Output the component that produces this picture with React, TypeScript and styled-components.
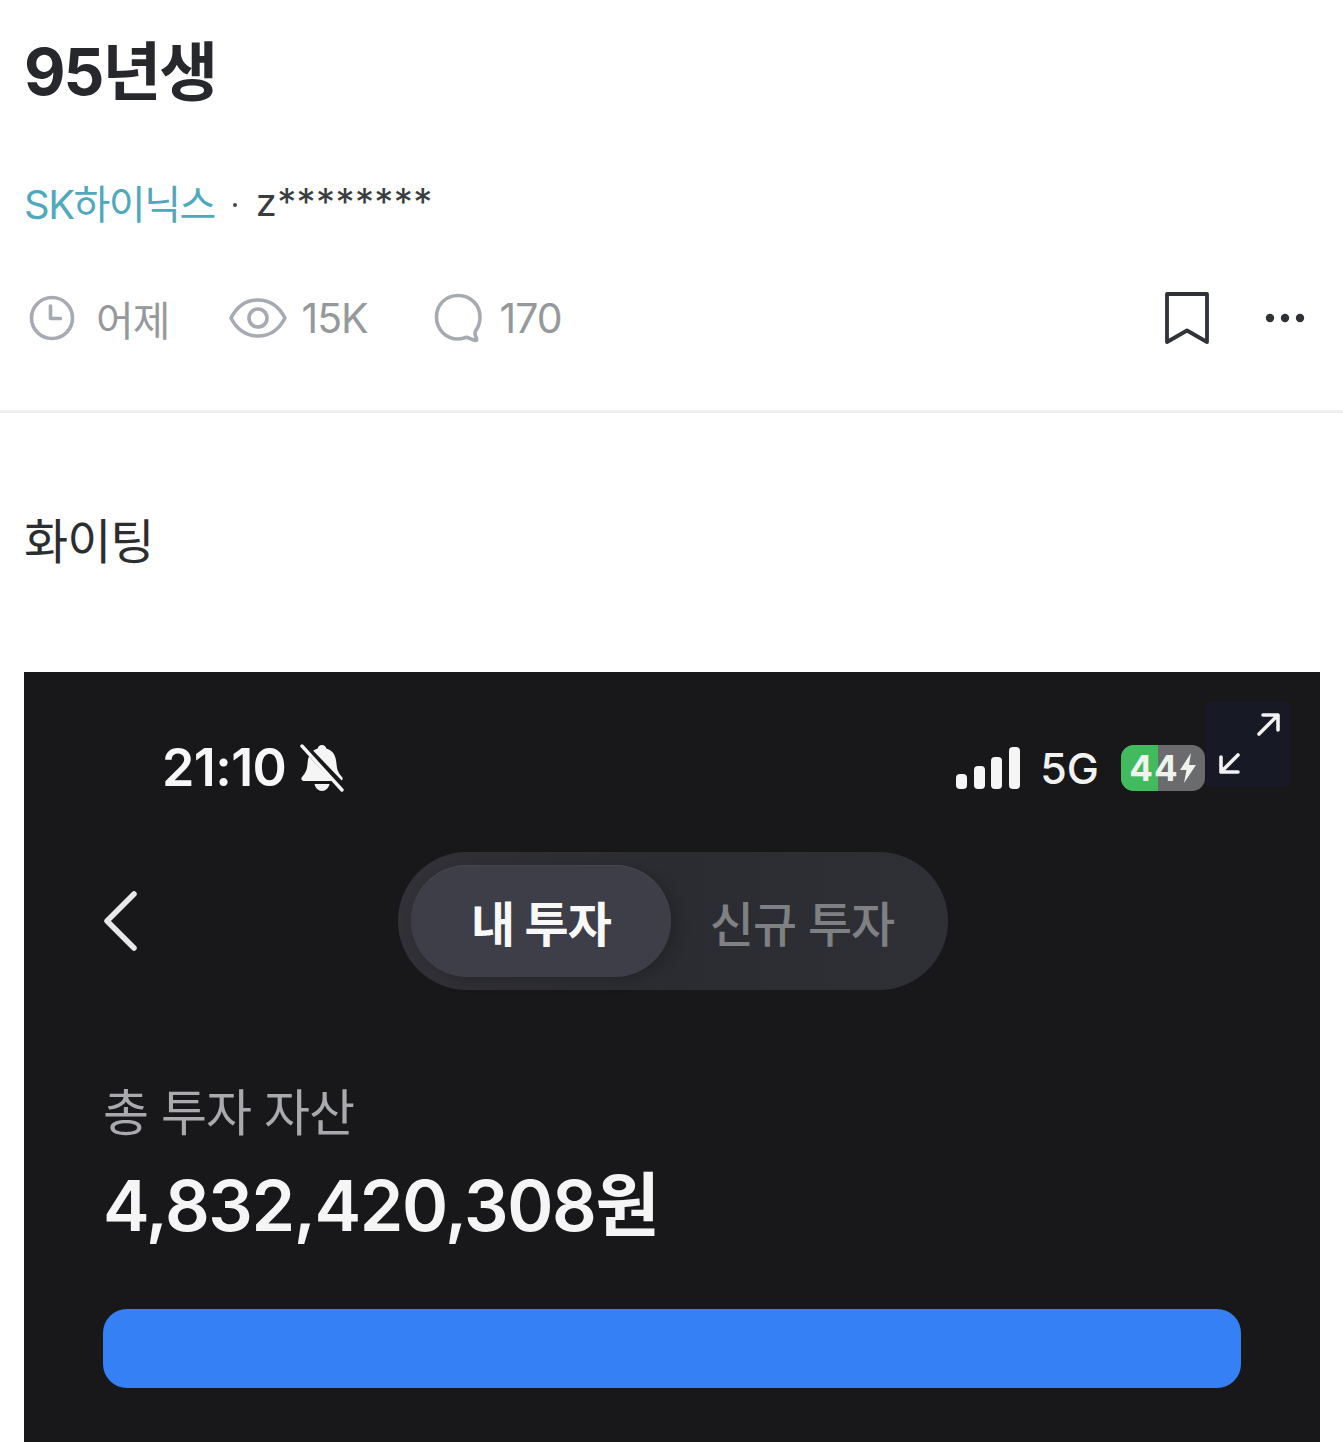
import React from 'react'
import styled, { createGlobalStyle } from 'styled-components'

const GlobalStyle = createGlobalStyle`
  html, body {
    margin: 0;
    padding: 0;
    background: #fff;
    overflow: hidden;
  }
  * { box-sizing: border-box; }
`

const fontStack = `Inter, "Noto Sans CJK KR", sans-serif`

const Page = styled.div`
  width: 1343px;
  height: 1442px;
  overflow: hidden;
  background: #fff;
  font-family: ${fontStack};
`

const Header = styled.header`
  padding: 32px 24px 0;
  height: 413px;
  border-bottom: 3px solid #eff0f1;
`

const Title = styled.h1`
  margin: 0;
  height: 80px;
  font-size: 64px;
  line-height: 80px;
  font-weight: 700;
  letter-spacing: -2px;
  color: #26282b;
`

const Source = styled.div`
  display: flex;
  align-items: center;
  margin-top: 66px;
  height: 48px;
  font-size: 40px;
`

const Board = styled.span`
  color: #4fa9bd;
  letter-spacing: -1.5px;
`

const Dot = styled.span`
  width: 4px;
  height: 4px;
  margin: 6px 19px 0 18px;
  border-radius: 50%;
  background: #44474b;
`

const Author = styled.span`
  color: #3a3d40;
  font-size: 38px;
  letter-spacing: 0.4px;
`

const MetaRow = styled.div`
  display: flex;
  align-items: center;
  margin-top: 64px;
  height: 56px;
  padding-left: 4px;
`

const Meta = styled.div<{ $gap: number; $after: number }>`
  display: flex;
  align-items: center;
  gap: ${({ $gap }) => $gap}px;
  margin-right: ${({ $after }) => $after}px;
  font-size: 41px;
  letter-spacing: -1px;
  color: #96999c;
`

const MetaActions = styled.div`
  display: flex;
  align-items: center;
  margin-left: auto;
  gap: 56px;
  padding-right: 14px;
`

const Content = styled.main`
  padding: 98px 24px 0;
`

const BodyText = styled.p`
  margin: 0;
  height: 62px;
  font-size: 48px;
  line-height: 62px;
  letter-spacing: -1px;
  color: #2b2d30;
`

const Shot = styled.section`
  position: relative;
  margin-top: 99px;
  width: 1296px;
  height: 800px;
  padding: 0 79px;
  background: #18181b;
  color: #fff;
`

const ExpandButton = styled.div`
  position: absolute;
  top: 30px;
  right: 30px;
  width: 84px;
  height: 84px;
  background: #171a24;
`

const StatusBar = styled.div`
  display: flex;
  align-items: center;
  height: 56px;
  margin-top: 0;
  padding: 0 0 0 59px;
  position: relative;
  top: 68px;
`

const Time = styled.span`
  font-size: 52px;
  line-height: 56px;
  font-weight: 600;
  letter-spacing: -0.6px;
  color: #f7f7f7;
`

const StatusRight = styled.div`
  display: flex;
  align-items: center;
  margin-left: auto;
  margin-right: 36px;
`

const Network = styled.span`
  margin: 0 22px 0 20px;
  font-size: 43px;
  font-weight: 500;
  color: #f2f2f2;
`

const Battery = styled.div`
  position: relative;
  display: flex;
  align-items: center;
  justify-content: center;
  width: 84px;
  height: 46px;
  border-radius: 13px;
  overflow: hidden;
  background: #6b6b6d;
  font-size: 35px;
  font-weight: 700;
  letter-spacing: 1px;
  color: #eef3ee;
`

const BatteryFill = styled.div<{ $pct: number }>`
  position: absolute;
  inset: 0 auto 0 0;
  width: ${({ $pct }) => $pct}%;
  background: #41bb5d;
`

const BatteryLabel = styled.span`
  position: relative;
  display: flex;
  align-items: center;
`

const NavRow = styled.div`
  display: flex;
  align-items: center;
  margin-top: 124px;
  height: 138px;
`

const BackButton = styled.div`
  display: flex;
  align-items: center;
  width: 295px;
`

const Segment = styled.div`
  display: flex;
  align-items: center;
  width: 550px;
  height: 138px;
  padding: 0 13px;
  border-radius: 69px;
  background: linear-gradient(90deg, #313137 0%, #2b2c31 50%, #2f3036 100%);
  font-size: 48px;
  letter-spacing: -1px;
`

const SegmentTab = styled.div<{ $active?: boolean }>`
  display: flex;
  align-items: center;
  justify-content: center;
  flex: 0 0 ${({ $active }) => ($active ? '260px' : '262px')};
  height: 112px;
  border-radius: 56px;
  font-weight: ${({ $active }) => ($active ? 700 : 500)};
  color: ${({ $active }) => ($active ? '#f8f8f8' : '#7f8084')};
  background: ${({ $active }) => ($active ? '#3d3e47' : 'transparent')};
  box-shadow: ${({ $active }) => ($active ? '0 1px 0 #47484f inset, 6px 4px 14px rgba(0,0,0,0.18)' : 'none')};
`

const AssetLabel = styled.div`
  margin-top: 90px;
  height: 66px;
  font-size: 50px;
  line-height: 66px;
  letter-spacing: -1px;
  color: #a9aaad;
`

const AssetValue = styled.div`
  margin-top: 22px;
  height: 76px;
  font-size: 70px;
  line-height: 76px;
  font-weight: 600;
  letter-spacing: -1.4px;
  color: #f5f5f5;
`

const PrimaryButton = styled.div`
  margin-top: 65px;
  width: 1138px;
  height: 79px;
  border-radius: 24px;
  background: #3680f6;
`

const ClockIcon = () => (
  <svg width="48" height="48" viewBox="0 0 48 48" fill="none" stroke="#a5abb1" strokeWidth="3.6" strokeLinecap="round" strokeLinejoin="round">
    <circle cx="24" cy="24" r="20.5" />
    <path d="M22.5 12v12.5h10" />
  </svg>
)

const EyeIcon = () => (
  <svg width="58" height="42" viewBox="0 0 58 42" fill="none" stroke="#a5abb1" strokeWidth="3.6" strokeLinecap="round" strokeLinejoin="round">
    <path d="M2 21C8 9.5 17.5 3 29 3s21 6.500 27 18c-6 11.500-15.500 18-27 18S8 32.500 2 21z" />
    <circle cx="29" cy="21" r="9" />
  </svg>
)

const CommentIcon = () => (
  <svg width="50" height="50" viewBox="0 0 50 50" fill="none" stroke="#a5abb1" strokeWidth="3.6" strokeLinecap="round" strokeLinejoin="round">
    <path d="M24 2.500C35.500 2.500 46 11 46 24c0 5.500-1.500 10-4.500 14-.8 1.200-.6 3.800 1 7.500.6 1.500-.2 2.200-1.800 1.700-3.500-1-6.200-2.300-8-3-2 .9-5.500 1.800-8.700 1.800C12 46 2.500 36.500 2.500 24S12 2.500 24 2.500z" />
  </svg>
)

const BookmarkIcon = () => (
  <svg width="44" height="52" viewBox="0 0 44 52" fill="none" stroke="#2f3236" strokeWidth="3.800" strokeLinecap="round" strokeLinejoin="round">
    <path d="M2 2h40v48L22 38.500 2 50z" />
  </svg>
)

const MoreIcon = () => (
  <svg width="40" height="10" viewBox="0 0 40 10" fill="#2f3236">
    <circle cx="5" cy="5" r="4.200" />
    <circle cx="20" cy="5" r="4.200" />
    <circle cx="35" cy="5" r="4.200" />
  </svg>
)

const MutedBellIcon = () => (
  <svg width="46" height="48" viewBox="0 0 46 48" style={{ marginLeft: 13 }}>
    <path fill="#f5f5f5" d="M23 1c2.400 0 4 1.500 4.300 3.600C34.500 6.500 37 12.500 37.500 20c.4 6 2 9 5.500 13 1.400 1.600.5 4-1.800 4H4.800C2.500 37 1.600 34.600 3 33c3.500-4 5.100-7 5.500-13C9 12.500 11.500 6.500 18.700 4.600 19 2.500 20.600 1 23 1z" />
    <path fill="#f5f5f5" d="M15.500 40h15c-.8 4-3.800 7-7.500 7s-6.700-3-7.500-7z" />
    <path stroke="#18181b" strokeWidth="7" d="M2 -1L46 45" />
    <path stroke="#f5f5f5" strokeWidth="3.400" strokeLinecap="round" d="M3 2L43 46" />
  </svg>
)

const SignalIcon = () => (
  <svg width="64" height="42" viewBox="0 0 64 42" fill="#f5f5f5">
    <rect x="0" y="27" width="11" height="15" rx="4" />
    <rect x="18" y="19" width="11" height="23" rx="4" />
    <rect x="35" y="10" width="11" height="32" rx="4" />
    <rect x="53" y="0" width="11" height="42" rx="4" />
  </svg>
)

const BoltIcon = () => (
  <svg width="18" height="30" viewBox="0 0 18 30" fill="#eef3ee">
    <path d="M12 0L1 17h6.500L5 30 17 12h-7z" />
  </svg>
)

const BackIcon = () => (
  <svg width="36" height="60" viewBox="0 0 36 60" fill="none" stroke="#e8e8e8" strokeWidth="5.500" strokeLinecap="round" strokeLinejoin="round">
    <path d="M31 3L4 30l27 27" />
  </svg>
)

const ExpandIcon = () => (
  <svg width="84" height="84" viewBox="0 0 84 84" fill="none" stroke="#f2f2f2" strokeWidth="3.600" strokeLinecap="round" strokeLinejoin="round">
    <path d="M53 32L71 14M57 13h15v15" />
    <path d="M32 53L15 70M15 55v15h17" />
  </svg>
)

export default function App() {
  return (
    <Page>
      <GlobalStyle />
      <Header>
        <Title>95년생</Title>
        <Source>
          <Board>SK하이닉스</Board>
          <Dot />
          <Author>z********</Author>
        </Source>
        <MetaRow>
          <Meta $gap={20} $after={60}>
            <ClockIcon />
            어제
          </Meta>
          <Meta $gap={14} $after={66}>
            <EyeIcon />
            15K
          </Meta>
          <Meta $gap={16} $after={0}>
            <CommentIcon />
            170
          </Meta>
          <MetaActions>
            <BookmarkIcon />
            <MoreIcon />
          </MetaActions>
        </MetaRow>
      </Header>
      <Content>
        <BodyText>화이팅</BodyText>
        <Shot>
          <ExpandButton>
            <ExpandIcon />
          </ExpandButton>
          <StatusBar>
            <Time>21:10</Time>
            <MutedBellIcon />
            <StatusRight>
              <SignalIcon />
              <Network>5G</Network>
              <Battery>
                <BatteryFill $pct={44} />
                <BatteryLabel>
                  44
                  <BoltIcon />
                </BatteryLabel>
              </Battery>
            </StatusRight>
          </StatusBar>
          <NavRow>
            <BackButton>
              <BackIcon />
            </BackButton>
            <Segment>
              <SegmentTab $active>내 투자</SegmentTab>
              <SegmentTab>신규 투자</SegmentTab>
            </Segment>
          </NavRow>
          <AssetLabel>총 투자 자산</AssetLabel>
          <AssetValue>4,832,420,308원</AssetValue>
          <PrimaryButton />
        </Shot>
      </Content>
    </Page>
  )
}
